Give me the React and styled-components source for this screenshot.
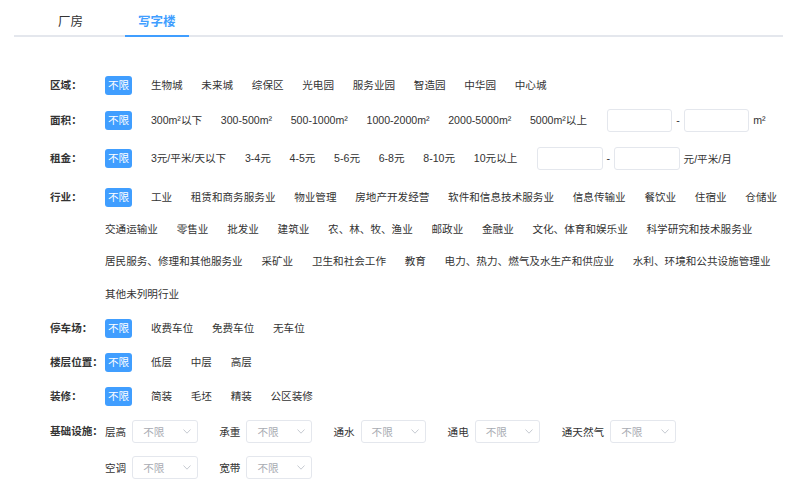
import React from 'react';
import styled, { createGlobalStyle } from 'styled-components';

const GlobalStyle = createGlobalStyle`
  body {
    margin: 0;
    background: #fff;
    color: #333;
    font-family: "Liberation Sans", "Noto Sans CJK SC", sans-serif;
  }
`

const Page = styled.div`
  padding: 10px 14px 0;
`

const TabBar = styled.div`
  display: flex;
  gap: 29px;
  padding-left: 31px;
  border-bottom: 2px solid #e4e7ed;
`

const Tab = styled.div`
  height: 25px;
  line-height: 25px;
  padding: 0 13px;
  margin-bottom: -2px;
  font-size: 12.5px;
  color: ${({ $active }) => ($active ? '#409eff' : '#333')};
  font-weight: ${({ $active }) => ($active ? 600 : 400)};
  border-bottom: 2px solid ${({ $active }) => ($active ? '#409eff' : 'transparent')};
  cursor: pointer;
`

const Filters = styled.div`
  margin-top: 39px;
  padding-left: 36px;
  font-size: 10.6px;
`

const Row = styled.div`
  display: flex;
  align-items: ${({ $top }) => ($top ? 'flex-start' : 'center')};
  margin-bottom: ${({ $mb }) => $mb ?? 15}px;
`

const Label = styled.div`
  width: 55px;
  flex-shrink: 0;
  line-height: ${({ $lh }) => $lh ?? 19}px;
  font-weight: bold;
  color: #333;
  white-space: nowrap;
`

const Options = styled.div`
  flex: 1;
  display: flex;
  flex-wrap: wrap;
  align-items: center;
  column-gap: 18.7px;
  row-gap: 13.4px;
`

const Option = styled.span`
  height: 19px;
  line-height: 19px;
  padding: ${({ $active }) => ($active ? '0 3px' : '0')};
  border-radius: 3px;
  white-space: pre;
  color: ${({ $active }) => ($active ? '#fff' : '#333')};
  background: ${({ $active }) => ($active ? '#409eff' : 'transparent')};
  cursor: pointer;
`

const RangeBox = styled.div`
  display: flex;
  align-items: center;
  margin-left: 1px;
`

const Input = styled.div`
  width: 65.5px;
  height: 23px;
  box-sizing: border-box;
  border: 1px solid #e4e7ed;
  border-radius: 3px;
  background: #fff;
`

const Dash = styled.span`
  margin: 0 4px;
  color: #333;
`

const Unit = styled.span`
  margin-left: 4px;
  color: #333;
`

const Facilities = styled.div`
  flex: 1;
  display: flex;
  flex-wrap: wrap;
  column-gap: 21.5px;
  row-gap: 13.5px;
`

const FacilityItem = styled.div`
  display: flex;
  align-items: center;
  gap: 6px;
`

const FacilityName = styled.span`
  color: #333;
  white-space: nowrap;
`

const Select = styled.div`
  width: 65.5px;
  height: 23px;
  box-sizing: border-box;
  border: 1px solid #e4e7ed;
  border-radius: 3px;
  display: flex;
  align-items: center;
  justify-content: space-between;
  padding: 0 6px 0 10px;
  color: #a8abb2;
`

const Chevron = () => (
  <svg width="8" height="5" viewBox="0 0 8 5">
    <polyline points="0.5,0.5 4,4.2 7.5,0.5" fill="none" stroke="#c0c4cc" strokeWidth="0.9" />
  </svg>
)

const rows = [
  { label: '区域：', mb: 13.5, items: ['生物城', '未来城', '综保区', '光电园', '服务业园', '智造园', '中华园', '中心城'] },
  { label: '面积：', mb: 15, unit: 'm²', items: ['300m²以下', '300-500m²', '500-1000m²', '1000-2000m²', '2000-5000m²', '5000m²以上'] },
  { label: '租金：', mb: 18, unit: '元/平米/月', items: ['3元/平米/天以下', '3-4元', '4-5元', '5-6元', '6-8元', '8-10元', '10元以上'] },
  {
    label: '行业：', mb: 15, top: true,
    items: [
      '工业', '租赁和商务服务业', '物业管理', '房地产开发经营', '软件和信息技术服务业', '信息传输业', '餐饮业', '住宿业', '仓储业',
      '交通运输业', '零售业', '批发业', '建筑业', '农、林、牧、渔业', '邮政业', '金融业', '文化、体育和娱乐业', '科学研究和技术服务业',
      '居民服务、修理和其他服务业', '采矿业', '卫生和社会工作', '教育', '电力、热力、燃气及水生产和供应业', '水利、环境和公共设施管理业',
      '其他未列明行业',
    ],
  },
  { label: '停车场：', mb: 15.5, items: ['收费车位', '免费车位', '无车位'] },
  { label: '楼层位置：', mb: 15.3, items: ['低层', '中层', '高层'] },
  { label: '装修：', mb: 13.5, items: ['简装', '毛坯', '精装', '公区装修'] },
]

const facilities = ['层高', '承重', '通水', '通电', '通天然气', '空调', '宽带']

const App = () => {
  return (
    <Page>
      <GlobalStyle />
      <TabBar>
        <Tab>厂房</Tab>
        <Tab $active>写字楼</Tab>
      </TabBar>
      <Filters>
        {rows.map((row) => (
          <Row key={row.label} $mb={row.mb} $top={row.top}>
            <Label>{row.label}</Label>
            <Options>
              <Option $active>不限</Option>
              {row.items.map((item) => (
                <Option key={item}>{item}</Option>
              ))}
              {row.unit && (
                <RangeBox>
                  <Input />
                  <Dash>-</Dash>
                  <Input />
                  <Unit>{row.unit}</Unit>
                </RangeBox>
              )}
            </Options>
          </Row>
        ))}
        <Row $top>
          <Label $lh={23}>基础设施：</Label>
          <Facilities>
            {facilities.map((name) => (
              <FacilityItem key={name}>
                <FacilityName>{name}</FacilityName>
                <Select>
                  不限
                  <Chevron />
                </Select>
              </FacilityItem>
            ))}
          </Facilities>
        </Row>
      </Filters>
    </Page>
  )
}

export default App
